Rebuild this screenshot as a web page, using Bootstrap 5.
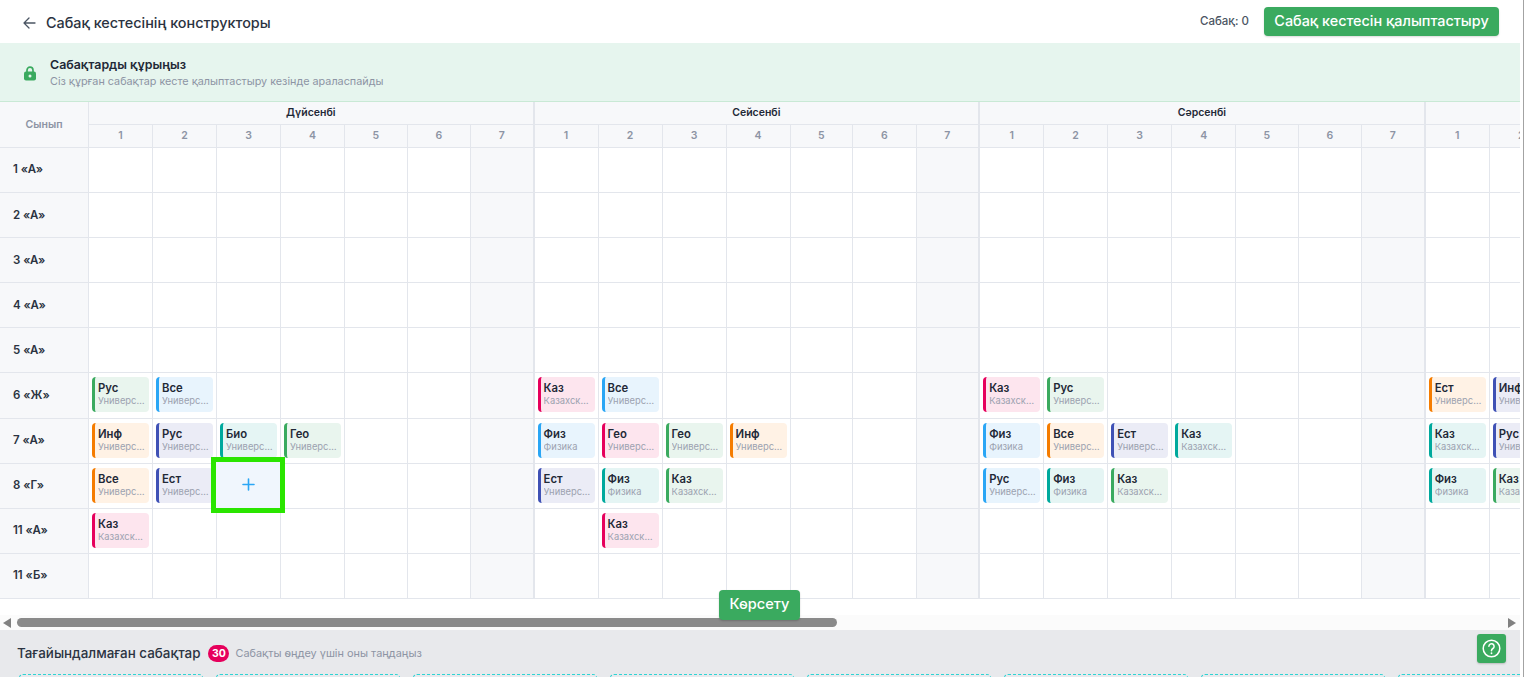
<!DOCTYPE html>
<html lang="kk">
<head>
<meta charset="utf-8">
<title>Сабақ кестесінің конструкторы</title>
<link href="https://cdn.jsdelivr.net/npm/bootstrap@5.3.0/dist/css/bootstrap.min.css" rel="stylesheet">
<style>
html,body{height:677px;overflow:hidden;background:#fff}
body{font-family:Inter,"Noto Sans",sans-serif;color:#1f2937}
.app-shell{width:1520px;height:677px}
.edge-line{width:4px;height:677px;border-right:1px solid #a3a3a3;flex:none}
.top-bar{height:43px;padding:2px 21px 0 23px}
.back-title{font-size:14.4px;font-weight:500;color:#2b3341;margin-left:10px}
.count-text{font-size:11.5px;color:#4b5563;font-weight:500;margin-top:-2px}
.btn-leaf{background:#3aaa5f;border:0;color:#fff;border-radius:4px;font-weight:500;--bs-btn-hover-bg:#3aaa5f;--bs-btn-hover-color:#fff}
.btn-build{font-size:14.4px;height:29px;width:235px;padding:0;margin-left:15px;margin-top:-3px;box-shadow:0 1px 2px rgba(0,0,0,.15)}
.notice{height:59px;background:#e6f5ee;border-bottom:1px solid #c9e9d5;padding:2px 0 0 24px}
.notice-title{font-size:12.4px;font-weight:600;color:#1f2937;line-height:16px}
.notice-sub{font-size:10.8px;color:#8d94a4;line-height:16px;margin-top:1px}
.notice-text{margin-left:14px}
.grid-zone{height:528px}
.grid-scroll{height:513px;overflow:hidden}
.fake-scroll{height:15px;background:#fbfbfb;padding:0 4px 0 3px}
.scroll-thumb{height:9px;background:#8a8a8a;border-radius:5px;margin-left:6px}
.sched{table-layout:fixed;width:1871px;border-collapse:separate;border-spacing:0;margin:0}
.sched th,.sched td{padding:0;border:0;border-right:1px solid #e3e6ec;border-bottom:1px solid #e3e6ec;background:#fff;vertical-align:top}
.sched thead th{background:#f7f8fa;text-align:center;vertical-align:middle}
.sched .class-head{font-size:10.5px;font-weight:600;color:#8d94a4}
.sched .day-head{height:23px;font-size:10.5px;font-weight:600;color:#1f2937}
.sched .num-head{height:23px;font-size:10.5px;font-weight:600;color:#8d94a4}
.sched th.class-name{background:#f7f8fa;font-size:11.5px;font-weight:600;color:#2b3341;text-align:left;padding-left:13px;vertical-align:middle}
.sched tbody tr{height:45.1px}
.sched td.rest-col{background:#f7f8fa}
.sched .day-end{border-right:2px solid #e3e6ec}
.lesson-tile{height:35px;margin:4px 3px 0 3px;border-left:3px solid;border-radius:4px;padding:4px 3px 0 3px;overflow:hidden}
.lesson-name{font-size:11.3px;font-weight:600;line-height:14px;color:#1f2937}
.lesson-sub{font-size:9.4px;line-height:12px;color:#9ca2b0;white-space:nowrap;overflow:hidden;text-overflow:ellipsis}
.tone-green{background:#e9f5ee;border-color:#3aaa5f}
.tone-blue{background:#e8f4fd;border-color:#2aa6f5}
.tone-orange{background:#fff2e5;border-color:#f57c00}
.tone-indigo{background:#ebecf6;border-color:#3f51b5}
.tone-teal{background:#e5f5f4;border-color:#00a99d}
.tone-pink{background:#fde5ee;border-color:#e6005c}
.hover-cell{position:relative}
.add-slot{position:absolute;left:-6px;top:-7px;width:74px;height:56px;border:5px solid #2ae500;background:#f0f6fd;z-index:2}
.show-btn{position:absolute;left:719px;top:488px;width:81px;height:30px;padding:0;font-size:14.6px;z-index:3;box-shadow:0 1px 2px rgba(0,0,0,.2)}
.tray{height:47px;background:#e8e9ec;padding-left:17px;flex:none;overflow:hidden}
.tray-head{height:44px;padding-top:3px}
.tray-title{font-size:13.4px;font-weight:500;color:#2b3341}
.tray-count{background:#e6005c;color:#fff;font-size:10.5px;font-weight:700;width:21px;height:17px;padding:0;line-height:17px;border-radius:9px;margin-left:8px}
.tray-hint{font-size:10.9px;color:#8d94a4;margin-left:6px}
.tray-slots{gap:13px;padding-left:2px}
.tray-slot{width:184px;height:20px;flex:none;border:1px dashed #2fd4d4;border-radius:4px}
.help-btn{position:absolute;left:1477px;top:634px;width:29px;height:29px;padding:0;border-radius:3px;z-index:4;box-shadow:0 1px 2px rgba(0,0,0,.2)}
</style>
</head>
<body>
<div class="d-flex">
  <div class="app-shell d-flex flex-column position-relative">
    <header class="top-bar d-flex align-items-center">
      <svg width="13" height="12" viewBox="0 0 13 12" fill="none" stroke="#4b5563" stroke-width="1.3" stroke-linecap="round" stroke-linejoin="round"><path d="M12 6H1M6 1 1 6l5 5"/></svg>
      <span class="back-title">Сабақ кестесінің конструкторы</span>
      <span class="count-text ms-auto">Сабақ: 0</span>
      <button type="button" class="btn btn-leaf btn-build">Сабақ кестесін қалыптастыру</button>
    </header>
    <section class="notice d-flex align-items-center">
      <svg width="12" height="15" viewBox="0 0 12 15"><path d="M3 6.5V4.2a3 3 0 0 1 6 0v2.3" fill="none" stroke="#3aaa5f" stroke-width="1.7"/><rect y="5.6" width="12" height="9" rx="2" fill="#3aaa5f"/><circle cx="6" cy="10" r="1.5" fill="#e6f5ee"/></svg>
      <div class="notice-text">
        <div class="notice-title">Сабақтарды құрыңыз</div>
        <div class="notice-sub">Сіз құрған сабақтар кесте қалыптастыру кезінде араласпайды</div>
      </div>
    </section>
    <div class="grid-zone position-relative">
      <div class="grid-scroll">
        <table class="sched table" id="sched"></table>
      </div>
      <div class="fake-scroll d-flex align-items-center">
        <svg width="8" height="10" viewBox="0 0 8 10"><path d="M8 0v10L0 5z" fill="#808080"/></svg>
        <div class="scroll-thumb" style="width:820px"></div>
        <svg class="ms-auto" width="8" height="10" viewBox="0 0 8 10"><path d="M0 0v10l8-5z" fill="#808080"/></svg>
      </div>
      <button type="button" class="btn btn-leaf show-btn">Көрсету</button>
    </div>
    <section class="tray">
      <div class="tray-head d-flex align-items-center">
        <span class="tray-title">Тағайындалмаған сабақтар</span>
        <span class="badge tray-count">30</span>
        <span class="tray-hint">Сабақты өңдеу үшін оны таңдаңыз</span>
      </div>
      <div class="tray-slots d-flex">
        <div class="tray-slot"></div><div class="tray-slot"></div><div class="tray-slot"></div><div class="tray-slot"></div><div class="tray-slot"></div><div class="tray-slot"></div><div class="tray-slot"></div><div class="tray-slot"></div>
      </div>
    </section>
    <button type="button" class="btn btn-leaf help-btn d-flex align-items-center justify-content-center" aria-label="Көмек">
      <svg width="19" height="19" viewBox="0 0 19 19" fill="none" stroke="#fff" stroke-width="1.5" stroke-linecap="round"><circle cx="9.5" cy="9.5" r="8.3"/><path d="M6.9 7.3a2.6 2.6 0 1 1 4 2.2c-.9.6-1.4 1-1.4 2v.3"/><path d="M9.5 14.2v.1" stroke-width="1.8"/></svg>
    </button>
  </div>
  <div class="edge-line"></div>
</div>
<script>
const U='Университет',K='Казахский язык',F='Физика';
const days=['Дүйсенбі','Сейсенбі','Сәрсенбі','Бейсенбі'];
const classes=['1 «А»','2 «А»','3 «А»','4 «А»','5 «А»','6 «Ж»','7 «А»','8 «Г»','11 «А»','11 «Б»'];
const widths=[64,64,64,64,62.5,63.5,63.5];
const L={
 '0-5-0':['Рус',U,'green'],'0-5-1':['Все',U,'blue'],
 '0-6-0':['Инф',U,'orange'],'0-6-1':['Рус',U,'indigo'],'0-6-2':['Био',U,'teal'],'0-6-3':['Гео',U,'green'],
 '0-7-0':['Все',U,'orange'],'0-7-1':['Ест',U,'indigo'],
 '0-8-0':['Каз',K,'pink'],
 '1-5-0':['Каз',K,'pink'],'1-5-1':['Все',U,'blue'],
 '1-6-0':['Физ',F,'blue'],'1-6-1':['Гео',U,'pink'],'1-6-2':['Гео',U,'green'],'1-6-3':['Инф',U,'orange'],
 '1-7-0':['Ест',U,'indigo'],'1-7-1':['Физ',F,'teal'],'1-7-2':['Каз',K,'green'],
 '1-8-1':['Каз',K,'pink'],
 '2-5-0':['Каз',K,'pink'],'2-5-1':['Рус',U,'green'],
 '2-6-0':['Физ',F,'blue'],'2-6-1':['Все',U,'orange'],'2-6-2':['Ест',U,'indigo'],'2-6-3':['Каз',K,'teal'],
 '2-7-0':['Рус',U,'blue'],'2-7-1':['Физ',F,'teal'],'2-7-2':['Каз',K,'green'],
 '3-5-0':['Ест',U,'orange'],'3-5-1':['Инф',U,'indigo'],
 '3-6-0':['Каз',K,'teal'],'3-6-1':['Рус',U,'indigo'],
 '3-7-0':['Физ',F,'teal'],'3-7-1':['Каз',K,'green']
};
let h='<colgroup><col style="width:89px">';
days.forEach(()=>widths.forEach(w=>h+=`<col style="width:${w}px">`));
h+='</colgroup><thead><tr><th rowspan="2" class="class-head">Сынып</th>';
days.forEach(d=>h+=`<th colspan="7" class="day-head day-end">${d}</th>`);
h+='</tr><tr>';
days.forEach(()=>{for(let p=1;p<=7;p++)h+=`<th class="num-head${p==7?' day-end':''}">${p}</th>`});
h+='</tr></thead><tbody>';
classes.forEach((c,r)=>{
 h+=`<tr><th class="class-name">${c}</th>`;
 days.forEach((_,d)=>{for(let p=0;p<7;p++){
  const x=L[d+'-'+r+'-'+p];
  let cls=(p==6?'rest-col day-end':'');
  let inner='';
  if(x)inner=`<div class="lesson-tile tone-${x[2]}"><div class="lesson-name">${x[0]}</div><div class="lesson-sub">${x[1]}</div></div>`;
  if(d==0&&r==7&&p==2){cls='hover-cell';inner='<div class="add-slot d-flex align-items-center justify-content-center"><svg width="13" height="13" viewBox="0 0 13 13" stroke="#2aa6f5" stroke-width="1.6" stroke-linecap="round"><path d="M6.5 1v11M1 6.5h11"/></svg></div>';}
  h+=`<td class="${cls}">${inner}</td>`;
 }});
 h+='</tr>';
});
document.getElementById('sched').innerHTML=h+'</tbody>';
</script>
<script src="https://cdn.jsdelivr.net/npm/bootstrap@5.3.0/dist/js/bootstrap.bundle.min.js"></script>
</body>
</html>
